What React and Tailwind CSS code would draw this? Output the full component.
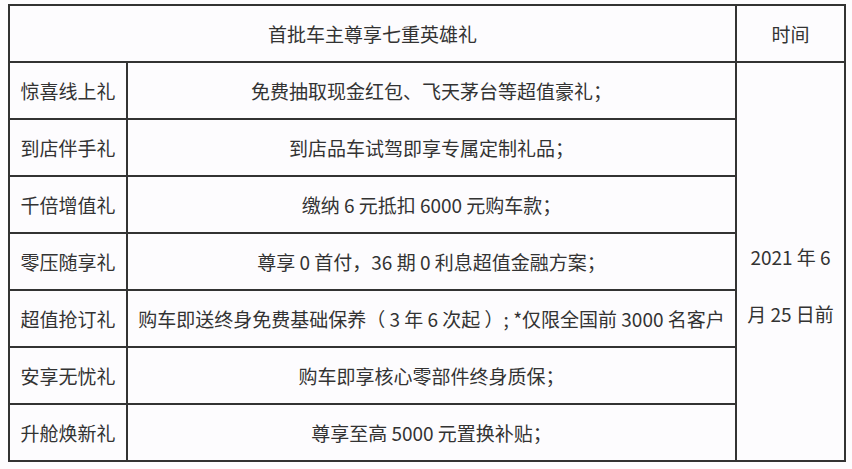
import React from "react";

const rows = [
  ["惊喜线上礼", "免费抽取现金红包、飞天茅台等超值豪礼；"],
  ["到店伴手礼", "到店品车试驾即享专属定制礼品；"],
  ["千倍增值礼", "缴纳 6 元抵扣 6000 元购车款；"],
  ["零压随享礼", "尊享 0 首付，36 期 0 利息超值金融方案；"],
  ["超值抢订礼", "购车即送终身免费基础保养（ 3 年 6 次起 ）; *仅限全国前 3000 名客户"],
  ["安享无忧礼", "购车即享核心零部件终身质保；"],
  ["升舱焕新礼", "尊享至高 5000 元置换补贴；"],
];

export default function App() {
  return (
    <div
      className="w-[852px] h-[469px] bg-[#fdfcfe] pt-[4px] pl-[8px] text-[#333333] text-[19px] leading-none"
      style={{ fontFamily: '"Noto Sans CJK SC", "Noto Sans", sans-serif' }}
    >
      <div className="grid grid-cols-[116px_607px_107px] grid-rows-[55px_repeat(7,55px)] gap-[2px] p-[2px] bg-[#333333] w-[838px]">
        <div className="col-span-2 bg-[#fdfcfe] flex items-center justify-center">
          首批车主尊享七重英雄礼
        </div>
        <div className="bg-[#fdfcfe] flex items-center justify-center">时间</div>
        {rows.map(([a, b], i) => (
          <React.Fragment key={a}>
            <div className="bg-[#fdfcfe] flex items-center justify-center">{a}</div>
            <div className="bg-[#fdfcfe] flex items-center justify-center whitespace-nowrap">{b}</div>
            {i === 0 && (
              <div className="row-span-7 col-start-3 bg-[#fdfcfe] flex flex-col items-center pt-[165px] leading-[57px]">
                <div>2021 年 6</div>
                <div>月 25 日前</div>
              </div>
            )}
          </React.Fragment>
        ))}
      </div>
    </div>
  );
}
